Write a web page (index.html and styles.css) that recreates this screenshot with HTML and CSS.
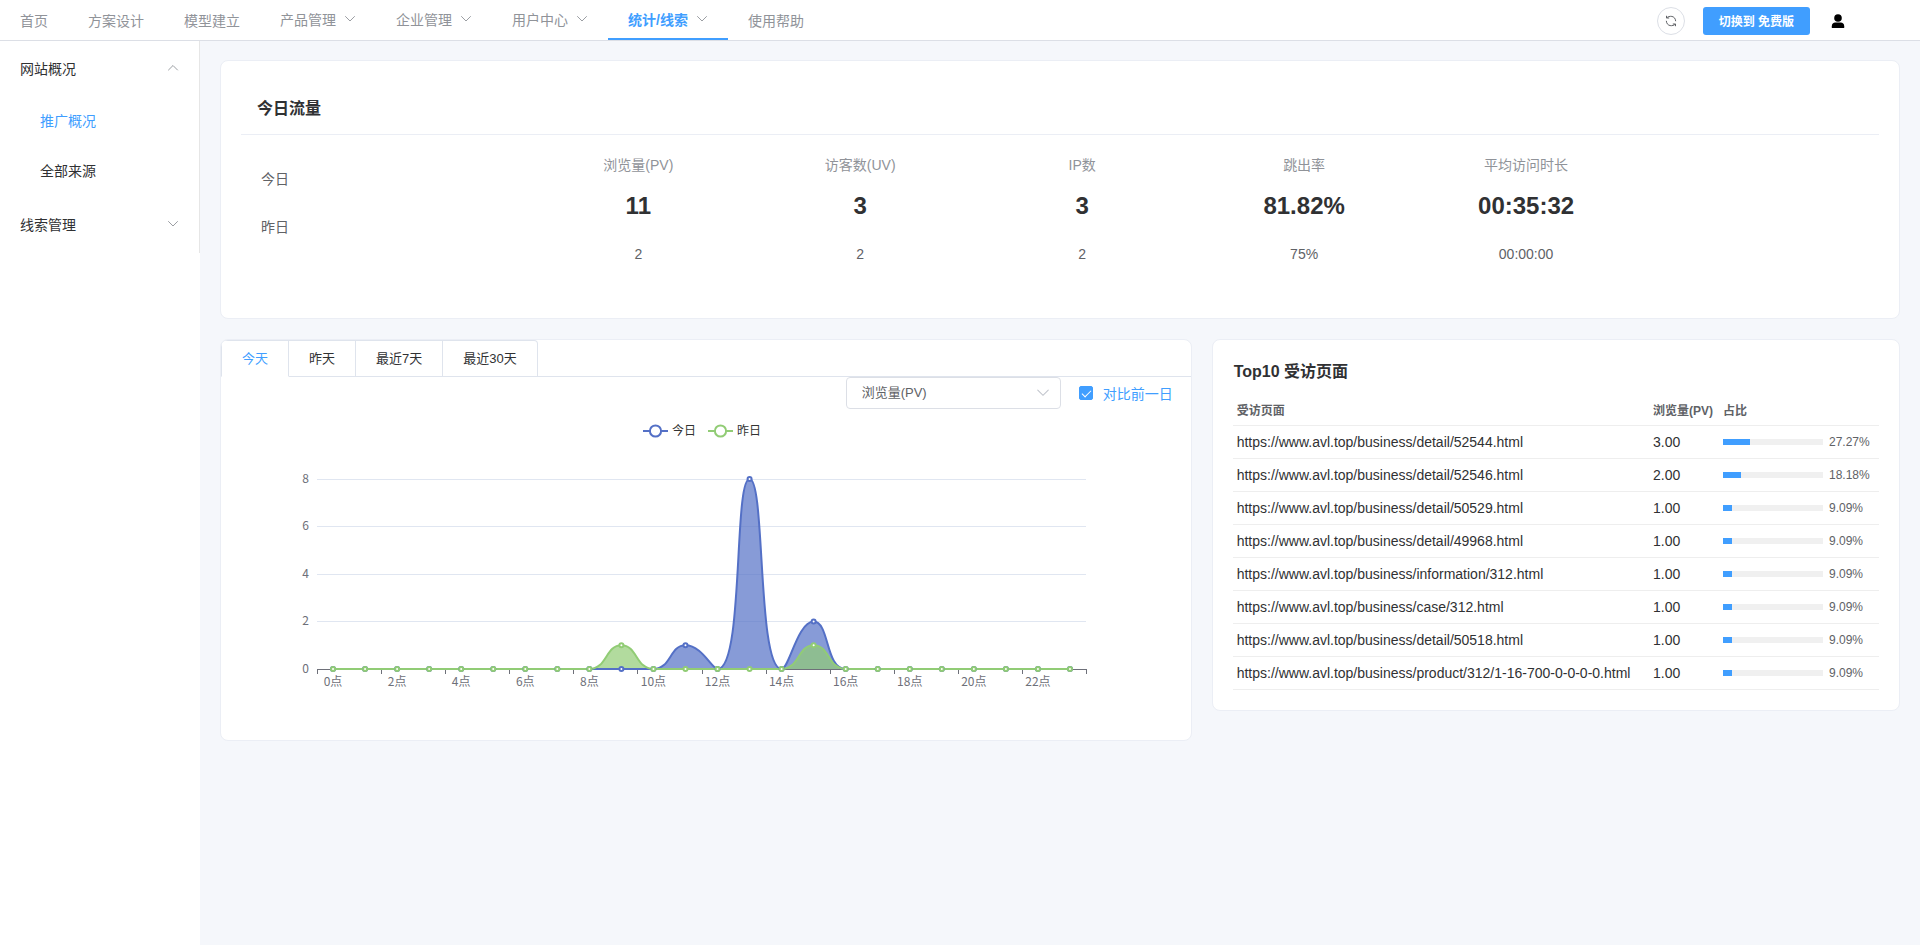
FILE: index.html
```html
<!DOCTYPE html>
<html lang="zh-CN">
<head>
    <meta charset="UTF-8">
    <meta name="viewport" content="width=device-width, initial-scale=1.0">
    <title>推广概况</title>
    <link rel="stylesheet" href="styles.css">
</head>
<body>
    <svg class="sprite" aria-hidden="true">
        <symbol id="arrow-down" viewBox="0 0 12 12">
            <path d="M1.5 3.5 6 8l4.5-4.5" fill="none" stroke="currentColor" stroke-width="0.9" stroke-linecap="round"/>
        </symbol>
        <symbol id="arrow-up" viewBox="0 0 12 12">
            <path d="M1.5 8 6 3.5 10.5 8" fill="none" stroke="currentColor" stroke-width="0.9" stroke-linecap="round"/>
        </symbol>
    </svg>

    <header class="header">
        <nav class="nav">
            <a class="nav-item" href="#">首页</a>
            <a class="nav-item" href="#">方案设计</a>
            <a class="nav-item" href="#">模型建立</a>
            <a class="nav-item has-sub" href="#">产品管理<svg class="arrow"><use href="#arrow-down"/></svg></a>
            <a class="nav-item has-sub" href="#">企业管理<svg class="arrow"><use href="#arrow-down"/></svg></a>
            <a class="nav-item has-sub" href="#">用户中心<svg class="arrow"><use href="#arrow-down"/></svg></a>
            <a class="nav-item has-sub active" href="#">统计/线索<svg class="arrow"><use href="#arrow-down"/></svg></a>
            <a class="nav-item" href="#">使用帮助</a>
        </nav>
        <div class="header-tools">
            <button class="btn-refresh" aria-label="刷新">
                <svg width="12" height="12" viewBox="0 0 12 12" fill="none" stroke="currentColor">
                    <path d="M1.500 3H4.200M1.500 3V.800M1.800 2.800C4 .600 10.200.200 10.700 6.200M10.500 9H7.800M10.500 9v2.200M10.200 9.200C8 11.400 1.800 11.800 1.300 5.800"/>
                </svg>
            </button>
            <button class="btn-switch">切换到 免费版</button>
            <button class="btn-user" aria-label="用户">
                <svg width="14" height="14" viewBox="0 0 14 14">
                    <circle cx="7" cy="4" r="3.8"/>
                    <path d="M.8 14v-1.800C.8 10 2.300 8.600 4.300 8.600h5.400c2 0 3.500 1.400 3.500 3.600V14z"/>
                </svg>
            </button>
        </div>
    </header>

    <div class="layout">
        <aside class="sidebar">
            <div class="menu">
                <button class="menu-title">网站概况<svg class="arrow"><use href="#arrow-up"/></svg></button>
                <a class="menu-item active" href="#">推广概况</a>
                <a class="menu-item" href="#">全部来源</a>
                <button class="menu-title">线索管理<svg class="arrow"><use href="#arrow-down"/></svg></button>
            </div>
        </aside>

        <main class="main">
            <section class="card summary">
                <h2 class="summary-title">今日流量</h2>
                <div class="summary-grid">
                    <div class="summary-labels">
                        <p>今日</p>
                        <p>昨日</p>
                    </div>
                    <div class="stat">
                        <p class="stat-name">浏览量(PV)</p>
                        <p class="stat-today">11</p>
                        <p class="stat-yesterday">2</p>
                    </div>
                    <div class="stat">
                        <p class="stat-name">访客数(UV)</p>
                        <p class="stat-today">3</p>
                        <p class="stat-yesterday">2</p>
                    </div>
                    <div class="stat">
                        <p class="stat-name">IP数</p>
                        <p class="stat-today">3</p>
                        <p class="stat-yesterday">2</p>
                    </div>
                    <div class="stat">
                        <p class="stat-name">跳出率</p>
                        <p class="stat-today">81.82%</p>
                        <p class="stat-yesterday">75%</p>
                    </div>
                    <div class="stat">
                        <p class="stat-name">平均访问时长</p>
                        <p class="stat-today">00:35:32</p>
                        <p class="stat-yesterday">00:00:00</p>
                    </div>
                </div>
            </section>

            <div class="row">
                <section class="card trend">
                    <div class="tabs">
                        <button class="tab active">今天</button>
                        <button class="tab">昨天</button>
                        <button class="tab">最近7天</button>
                        <button class="tab">最近30天</button>
                    </div>
                    <div class="filters">
                        <div class="select">
                            <select aria-label="指标">
                                <option>浏览量(PV)</option>
                                <option>访客数(UV)</option>
                                <option>IP数</option>
                            </select>
                            <svg class="select-arrow"><use href="#arrow-down"/></svg>
                        </div>
                        <label class="compare">
                            <input type="checkbox" checked>
                            对比前一日
                        </label>
                    </div>
                    <svg class="chart" id="chart"></svg>
                </section>

                <section class="card top-pages">
                    <h2 class="top-title">Top10 受访页面</h2>
                    <table class="table">
                        <thead>
                            <tr>
                                <th>受访页面</th>
                                <th class="col-pv">浏览量(PV)</th>
                                <th class="col-rate">占比</th>
                            </tr>
                        </thead>
                        <tbody>
                            <tr>
                                <td>https://www.avl.top/business/detail/52544.html</td>
                                <td>3.00</td>
                                <td><div class="rate"><div class="bar"><div class="bar-inner" style="width: 27.27%"></div></div>27.27%</div></td>
                            </tr>
                            <tr>
                                <td>https://www.avl.top/business/detail/52546.html</td>
                                <td>2.00</td>
                                <td><div class="rate"><div class="bar"><div class="bar-inner" style="width: 18.18%"></div></div>18.18%</div></td>
                            </tr>
                            <tr>
                                <td>https://www.avl.top/business/detail/50529.html</td>
                                <td>1.00</td>
                                <td><div class="rate"><div class="bar"><div class="bar-inner" style="width: 9.09%"></div></div>9.09%</div></td>
                            </tr>
                            <tr>
                                <td>https://www.avl.top/business/detail/49968.html</td>
                                <td>1.00</td>
                                <td><div class="rate"><div class="bar"><div class="bar-inner" style="width: 9.09%"></div></div>9.09%</div></td>
                            </tr>
                            <tr>
                                <td>https://www.avl.top/business/information/312.html</td>
                                <td>1.00</td>
                                <td><div class="rate"><div class="bar"><div class="bar-inner" style="width: 9.09%"></div></div>9.09%</div></td>
                            </tr>
                            <tr>
                                <td>https://www.avl.top/business/case/312.html</td>
                                <td>1.00</td>
                                <td><div class="rate"><div class="bar"><div class="bar-inner" style="width: 9.09%"></div></div>9.09%</div></td>
                            </tr>
                            <tr>
                                <td>https://www.avl.top/business/detail/50518.html</td>
                                <td>1.00</td>
                                <td><div class="rate"><div class="bar"><div class="bar-inner" style="width: 9.09%"></div></div>9.09%</div></td>
                            </tr>
                            <tr>
                                <td>https://www.avl.top/business/product/312/1-16-700-0-0-0-0.html</td>
                                <td>1.00</td>
                                <td><div class="rate"><div class="bar"><div class="bar-inner" style="width: 9.09%"></div></div>9.09%</div></td>
                            </tr>
                        </tbody>
                    </table>
                </section>
            </div>
        </main>
    </div>

    <script src="chart.js"></script>
</body>
</html>
```

FILE: styles.css
```css
* {
    margin: 0;
    padding: 0;
    box-sizing: border-box;
}

body {
    min-height: 100vh;
    display: flex;
    flex-direction: column;
    background: #f5f7fb;
    color: #303133;
    font-family: "Liberation Sans", "Noto Sans CJK SC", sans-serif;
    font-size: 14px;
}

a {
    color: inherit;
    text-decoration: none;
}

button {
    background: none;
    border: none;
    color: inherit;
    font: inherit;
    cursor: pointer;
}

.sprite {
    display: none;
}

.arrow {
    width: 12px;
    height: 12px;
    color: #909399;
}

/* header */
.header {
    display: flex;
    justify-content: space-between;
    background: #fff;
    border-bottom: 1px solid #dcdfe6;
}

.nav {
    display: flex;
}

.nav-item {
    display: flex;
    align-items: center;
    gap: 8px;
    height: 40px;
    padding: 0 20px;
    color: #909399;
}

.nav-item.has-sub {
    border-bottom: 2px solid transparent;
}

.nav-item.active {
    color: #409eff;
    border-bottom-color: #409eff;
    font-weight: bold;
}

.header-tools {
    display: flex;
    align-items: center;
    padding: 2px 75px 0 0;
}

.btn-refresh {
    display: flex;
    align-items: center;
    justify-content: center;
    width: 28px;
    height: 28px;
    margin-right: 18px;
    border: 1px solid #dcdfe6;
    border-radius: 50%;
    color: #606266;
}

.btn-switch {
    height: 28px;
    margin-right: 21px;
    padding: 0 16px 2px;
    border-radius: 3px;
    background: #409eff;
    color: #fff;
    font-size: 12px;
    font-weight: bold;
}

.btn-user {
    display: flex;
    color: #000;
}

/* sidebar */
.layout {
    flex: 1;
    display: flex;
}

.sidebar {
    width: 200px;
    background: #fff;
}

.menu {
    border-right: 1px solid #e6e6e6;
}

.menu-title {
    display: flex;
    align-items: center;
    justify-content: space-between;
    width: 100%;
    height: 56px;
    padding: 0 20px 3px;
}

.menu-item {
    display: block;
    height: 50px;
    padding-left: 40px;
    line-height: 48px;
}

.menu-item.active {
    color: #409eff;
}

/* content */
.main {
    flex: 1;
    min-width: 0;
    padding: 19px 20px;
}

.card {
    background: #fff;
    border: 1px solid #ebeef5;
    border-radius: 8px;
}

.summary {
    padding: 20px 20px 42px;
    margin-bottom: 20px;
}

.summary-title {
    padding: 17px 16px 15px;
    border-bottom: 1px solid #ebeef5;
    font-size: 16px;
    line-height: 21px;
}

.summary-grid {
    display: grid;
    grid-template-columns: 6fr repeat(6, 5fr);
    padding: 15px 20px 0;
}

.summary-labels {
    padding-top: 5px;
    color: #606266;
    line-height: 48px;
}

.stat {
    text-align: center;
}

.stat-name {
    color: #909399;
    line-height: 30px;
}

.stat-today {
    font-size: 24px;
    font-weight: bold;
    line-height: 52px;
}

.stat-yesterday {
    color: #606266;
    line-height: 44px;
}

.row {
    display: grid;
    grid-template-columns: repeat(24, 1fr);
    column-gap: 20px;
    align-items: start;
}

/* trend chart */
.trend {
    grid-column: span 14;
    padding-bottom: 52px;
    overflow: hidden;
}

.tabs {
    display: flex;
    height: 37px;
    border-bottom: 1px solid #dfe4ed;
}

.tab {
    height: 37px;
    padding: 0 20px 2px;
    border: solid #dfe4ed;
    border-width: 1px 1px 1px 0;
    font-size: 13px;
}

.tab:first-child {
    border-left-width: 1px;
    border-top-left-radius: 4px;
}

.tab:last-child {
    border-top-right-radius: 4px;
}

.tab.active {
    border-bottom-color: #fff;
    color: #409eff;
}

.filters {
    display: flex;
    justify-content: flex-end;
    gap: 18px;
    padding-right: 18px;
}

.select {
    position: relative;
}

.select select {
    appearance: none;
    width: 215px;
    height: 32px;
    padding: 0 30px 2px 15px;
    border: 1px solid #dcdfe6;
    border-radius: 4px;
    background: #fff;
    color: #606266;
    font-family: inherit;
    font-size: 13px;
}

.select-arrow {
    position: absolute;
    top: 9px;
    right: 11px;
    width: 14px;
    height: 14px;
    color: #c0c4cc;
    pointer-events: none;
}

.compare {
    display: flex;
    align-items: center;
    gap: 10px;
    color: #409eff;
}

.compare input {
    appearance: none;
    position: relative;
    width: 14px;
    height: 14px;
    border: 1px solid #dcdfe6;
    border-radius: 2px;
}

.compare input:checked {
    border-color: #409eff;
    background: #409eff;
}

.compare input:checked::after {
    content: "";
    position: absolute;
    top: 1px;
    left: 4px;
    width: 4px;
    height: 8px;
    border: solid #fff;
    border-width: 0 1px 1px 0;
    transform: rotate(45deg);
}

.chart {
    display: block;
    width: 99%;
    height: 269px;
    margin-top: 10px;
    font-family: "Noto Sans CJK SC", sans-serif;
    font-size: 12px;
}

.chart-split {
    stroke: #e0e6f1;
}

.chart-axis {
    stroke: #6e7079;
}

.chart-label {
    fill: #6e7079;
}

.chart-legend {
    fill: #333;
}

/* top pages */
.top-pages {
    grid-column: span 10;
    padding: 20px;
}

.top-title {
    margin-bottom: 10px;
    padding: 1px 1px 0;
    font-size: 16px;
    line-height: 22px;
}

.table {
    width: 100%;
    border-collapse: separate;
    border-spacing: 0;
}

.table th,
.table td {
    height: 33px;
    padding: 0 4px;
    border-bottom: 1px solid #eee;
    text-align: left;
    white-space: nowrap;
}

.table th {
    color: #606266;
    font-size: 12px;
}

.table .col-pv {
    width: 70px;
}

.table .col-rate {
    width: 160px;
}

.rate {
    display: flex;
    align-items: center;
    gap: 6px;
    color: #606266;
    font-size: 12px;
}

.bar {
    width: 100px;
    height: 6px;
    background: #f0f0f0;
}

.bar-inner {
    height: 100%;
    background: #409eff;
}
```

FILE: chart.js
```js
const chart = document.getElementById('chart');

const today = [0, 0, 0, 0, 0, 0, 0, 0, 0, 0, 0, 1, 0, 8, 0, 2, 0, 0, 0, 0, 0, 0, 0, 0];
const yesterday = [0, 0, 0, 0, 0, 0, 0, 0, 0, 1, 0, 0, 0, 0, 0, 1, 0, 0, 0, 0, 0, 0, 0, 0];
const series = [
    { name: '今日', color: '#5470c6', data: today },
    { name: '昨日', color: '#91cc75', data: yesterday }
];

const TOP = 60;
const BOTTOM = 250;
const MAX = 8;

function add(tag, attrs, text) {
    const el = document.createElementNS('http://www.w3.org/2000/svg', tag);
    for (const key in attrs) {
        el.setAttribute(key, attrs[key]);
    }
    if (text !== undefined) {
        el.textContent = text;
    }
    chart.appendChild(el);
}

function clamp(v, a, b) {
    return Math.max(Math.min(v, Math.max(a, b)), Math.min(a, b));
}

// Smooth curve through the points, control points kept inside each segment
function smoothPath(points) {
    let d = `M${points[0].x} ${points[0].y}`;
    let cp = points[0];

    for (let i = 1; i < points.length; i++) {
        const prev = points[i - 1];
        const p = points[i];
        const next = points[i + 1];
        let before = p;
        let after = p;

        if (next) {
            const lenPrev = Math.hypot(p.x - prev.x, p.y - prev.y);
            const lenNext = Math.hypot(next.x - p.x, next.y - p.y);
            const ratio = 0.5 * lenNext / (lenNext + lenPrev);
            const ax = clamp(p.x + (next.x - prev.x) * ratio, next.x, p.x);
            const ay = clamp(p.y + (next.y - prev.y) * ratio, next.y, p.y);
            before = {
                x: clamp(p.x - (ax - p.x) * lenPrev / lenNext, prev.x, p.x),
                y: clamp(p.y - (ay - p.y) * lenPrev / lenNext, prev.y, p.y)
            };
            after = {
                x: p.x + (p.x - before.x) * lenNext / lenPrev,
                y: p.y + (p.y - before.y) * lenNext / lenPrev
            };
        }

        d += `C${cp.x} ${cp.y} ${before.x} ${before.y} ${p.x} ${p.y}`;
        cp = after;
    }
    return d;
}

function draw() {
    chart.innerHTML = '';
    const width = Math.ceil(chart.getBoundingClientRect().width);
    const left = Math.floor(width * 0.1);
    const right = Math.ceil(width * 0.9) + 1;
    const step = (right - left) / 24;

    // Legend
    series.forEach((s, i) => {
        const x = Math.ceil(width / 2) - 58 + i * 65;
        add('line', { x1: x, y1: 12, x2: x + 25, y2: 12, stroke: s.color, 'stroke-width': 2 });
        add('circle', { cx: x + 12.5, cy: 12, r: 5.6, fill: '#fff', stroke: s.color, 'stroke-width': 2 });
        add('text', { x: x + 29, y: 16, class: 'chart-legend' }, s.name);
    });

    // Horizontal lines and y labels
    for (let v = 0; v <= MAX; v += 2) {
        const y = Math.floor(BOTTOM - (BOTTOM - TOP) * v / MAX) + 0.5;
        add('line', { x1: left, y1: y, x2: right, y2: y, class: v ? 'chart-split' : 'chart-axis' });
        add('text', { x: left - 8, y: y + 3, 'text-anchor': 'end', class: 'chart-label' }, v);
    }

    // Ticks and x labels
    for (let h = 0; h <= 24; h += 2) {
        const x = Math.round(left + h * step) + 0.5;
        add('line', { x1: x, y1: BOTTOM, x2: x, y2: BOTTOM + 5, class: 'chart-axis' });
        if (h < 24) {
            add('text', { x: left + (h + 0.5) * step, y: BOTTOM + 17, 'text-anchor': 'middle', class: 'chart-label' }, h + '点');
        }
    }

    series.forEach(s => {
        s.points = s.data.map((v, i) => ({
            x: left + (i + 0.5) * step,
            y: BOTTOM - (BOTTOM - TOP) * v / MAX
        }));
        s.path = smoothPath(s.points);
    });

    series.forEach(s => {
        const first = s.points[0];
        const last = s.points[23];
        add('path', { d: `${s.path}L${last.x} ${BOTTOM}L${first.x} ${BOTTOM}Z`, fill: s.color, 'fill-opacity': 0.7 });
    });
    series.forEach(s => {
        add('path', { d: s.path, fill: 'none', stroke: s.color, 'stroke-width': 2, 'stroke-linejoin': 'bevel' });
    });
    series.forEach(s => {
        s.points.forEach(p => {
            add('circle', { cx: p.x, cy: p.y, r: 2, fill: '#fff', stroke: s.color, 'stroke-width': 2 });
        });
    });
}

draw();
window.addEventListener('resize', draw);
```
